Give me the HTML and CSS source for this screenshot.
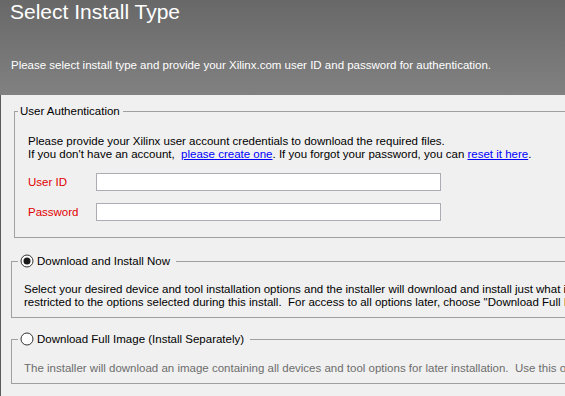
FILE: index.html
```html
<!DOCTYPE html>
<html lang="en">
	<head>
		<meta charset="UTF-8" />
		<title>Select Install Type</title>
		<link rel="stylesheet" href="styles.css">
	</head>
	<body>
		<div class="page">
			<div class="header">
				<h1>Select Install Type</h1>
				<p>Please select install type and provide your Xilinx.com user ID and password for authentication.</p>
			</div>
			<div class="content">
				<fieldset class="group auth">
					<legend>User Authentication</legend>
					<p class="info">Please provide your Xilinx user account credentials to download the required files.<br />
						If you don't have an account, &nbsp;<a href="#">please create one</a>. If you forgot your password, you can <a href="#">reset it here</a>.</p>
					<div class="row">
						<label class="field-label">User ID</label>
						<input class="field" type="text" />
					</div>
					<div class="row">
						<label class="field-label">Password</label>
						<input class="field" type="password" />
					</div>
				</fieldset>

				<fieldset class="group option now">
					<legend>
						<svg class="radio" width="14" height="14" viewBox="0 0 14 14">
							<circle cx="7" cy="7" r="6" fill="#fff" stroke="#333" stroke-width="1" />
							<circle cx="7" cy="7" r="3.5" fill="#1a1a1a" />
						</svg>
						Download and Install Now
					</legend>
					<p class="desc">Select your desired device and tool installation options and the installer will download and install just what is required.<br />
						restricted to the options selected during this install. &nbsp;For access to all options later, choose "Download Full Image".</p>
				</fieldset>

				<fieldset class="group option full">
					<legend>
						<svg class="radio" width="14" height="14" viewBox="0 0 14 14">
							<circle cx="7" cy="7" r="6" fill="#fff" stroke="#333" stroke-width="1" />
						</svg>
						Download Full Image (Install Separately)
					</legend>
					<p class="desc muted">The installer will download an image containing all devices and tool options for later installation. &nbsp;Use this option to install later.</p>
				</fieldset>
			</div>
		</div>
	</body>
</html>
```

FILE: styles.css
```css
* {
	padding: 0;
	margin: 0;
	box-sizing: border-box;
}
body {
	background-color: #f0f0f0;
	font-family: "Liberation Sans", Arial, sans-serif;
	font-size: 11.5px;
	color: #000;
	overflow: hidden;
}
.page {
	width: 565px;
	height: 396px;
	overflow: hidden;
}
.header {
	height: 95px;
	padding: 0 10px;
	background: linear-gradient(to bottom, #686868, #818181);
	color: #fff;
}
.header h1 {
	font-size: 21px;
	font-weight: normal;
	line-height: 24px;
}
.header p {
	margin-top: 35px;
	margin-left: 1px;
}
.content {
	border-left: 1px solid #5a5a5a;
	height: 301px;
	padding-top: 9px;
}
.group {
	border: 1px solid #a0a0a0;
	width: 700px;
}
.group legend {
	font-size: 11.5px;
	line-height: 14px;
}
.auth {
	margin-left: 13px;
	height: 134px;
	padding: 17px 0 0 13px;
}
.auth legend {
	padding: 0 3px 0 2px;
	margin-left: -10px;
}
.info {
	line-height: 13px;
	white-space: nowrap;
	margin-bottom: 12px;
}
.info a {
	color: #0000ff;
}
.row {
	display: flex;
	align-items: center;
	height: 18px;
}
.row + .row {
	margin-top: 12px;
}
.field-label {
	width: 68px;
	color: #e00000;
}
.field {
	width: 345px;
	height: 18px;
	border: 1px solid #abadb3;
	background: #fff;
}
.option {
	margin-left: 10px;
	padding: 0 0 0 12px;
}
.option legend {
	display: flex;
	align-items: center;
	gap: 3px;
	padding: 0 6px 0 2px;
	margin-left: -6px;
}
.now {
	margin-top: 16px;
	height: 64px;
	padding-top: 15px;
}
.full {
	margin-top: 14px;
	height: 52px;
	padding-top: 16px;
}
.desc {
	line-height: 13px;
	white-space: nowrap;
}
.muted {
	color: #6d6d6d;
}
```
